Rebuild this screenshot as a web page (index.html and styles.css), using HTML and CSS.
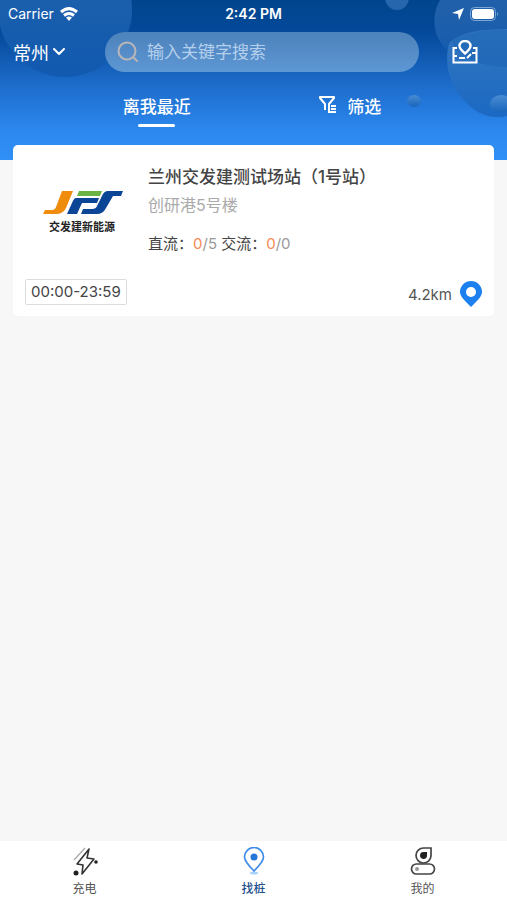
FILE: index.html
```html
<!DOCTYPE html>
<html lang="zh-CN">
<head>
<meta charset="utf-8">
<meta name="viewport" content="width=device-width, initial-scale=1">
<title>找桩</title>
<link rel="stylesheet" href="styles.css">
</head>
<body>
<div class="app">
  <header class="header">
    <svg class="decor decor-left" width="140" height="160" viewBox="0 0 140 160" aria-hidden="true">
      <defs>
        <linearGradient id="bubbleLeft" x1="0" y1="0" x2="0" y2="1">
          <stop offset="0.3" stop-color="#2367b3"/>
          <stop offset="1" stop-color="#1058ae"/>
        </linearGradient>
      </defs>
      <circle cx="65" cy="10" r="67" fill="url(#bubbleLeft)" opacity="0.85"/>
    </svg>
    <svg class="decor decor-right" width="127" height="160" viewBox="380 0 127 160" aria-hidden="true">
      <defs>
        <linearGradient id="bubble" x1="0" y1="0" x2="0" y2="1">
          <stop offset="0" stop-color="#4a8bd2"/>
          <stop offset="1" stop-color="#1765bd"/>
        </linearGradient>
        <linearGradient id="bubbleBig" x1="0" y1="0" x2="0" y2="1">
          <stop offset="0" stop-color="#3376be"/>
          <stop offset="1" stop-color="#1b69c4"/>
        </linearGradient>
        <linearGradient id="bubbleTop" x1="0" y1="0" x2="0" y2="1">
          <stop offset="0.2" stop-color="#2060aa"/>
          <stop offset="0.8" stop-color="#155caf"/>
        </linearGradient>
      </defs>
      <circle cx="397" cy="-2" r="12" fill="#2566ac"/>
      <path d="M440 0H507V67C476 67 447 58 438 38C432 25 434 10 440 0Z" fill="url(#bubbleTop)"/>
      <path d="M450 42C462 32 482 29 507 29V116C477 124 447 91 447 59C447 52 448 46 450 42Z" fill="url(#bubbleBig)"/>
      <path d="M507 30C490 29 468 32 452 40C453 53 476 67 507 67Z" fill="#1961b2" opacity="0.45"/>
      <ellipse cx="414" cy="101" rx="7" ry="6" fill="url(#bubble)"/>
      <ellipse cx="501" cy="104" rx="11" ry="9" fill="url(#bubble)"/>
    </svg>

    <div class="status">
      <div class="status-side">
        <span>Carrier</span>
        <svg width="18" height="14" viewBox="0 0 18 14" fill="none" stroke="#fff" stroke-width="3" aria-hidden="true">
          <path d="M1 5Q9-1.800 17 5M4 8.500Q9 4.500 14 8.500"/>
          <path d="M6 10.500Q9 8.500 12 10.500L9 14Z" fill="#fff" stroke="none"/>
        </svg>
      </div>
      <strong class="clock">2:42 PM</strong>
      <div class="status-side status-end">
        <svg width="12" height="12" viewBox="0 0 12 12" fill="#fff" aria-hidden="true"><path d="M12 0L7 12L6 6L0 5Z"/></svg>
        <svg width="29" height="14" viewBox="0 0 29 14" aria-hidden="true">
          <rect x="0.500" y="0.500" width="25" height="13" rx="4" fill="none" stroke="#7ba6d6"/>
          <rect x="2" y="2" width="22" height="10" rx="3" fill="#fff"/>
          <path d="M27 5Q29 7 27 9Z" fill="#7ba6d6"/>
        </svg>
      </div>
    </div>

    <div class="search-row">
      <button class="city" type="button">常州
        <svg width="12" height="8" viewBox="0 0 12 8" fill="none" stroke="#fff" stroke-width="2" stroke-linecap="round" stroke-linejoin="round" aria-hidden="true"><path d="M1 1L6 6L11 1"/></svg>
      </button>
      <label class="search">
        <svg width="22" height="22" viewBox="0 0 22 22" fill="none" stroke="#b9b6b8" stroke-width="2" stroke-linecap="round" aria-hidden="true"><circle cx="10" cy="10" r="8.500"/><path d="M17 17L20 20"/></svg>
        <input type="search" placeholder="输入关键字搜索" aria-label="输入关键字搜索">
      </label>
      <button class="map" type="button" aria-label="地图">
        <svg width="26" height="24" viewBox="0 0 26 24" fill="none" stroke="#fff" stroke-width="2" aria-hidden="true">
          <path d="M5 8H1.500V22.500H24.500V8H21"/>
          <path d="M13 13.500C9.500 10.500 7.500 8.500 7.500 6A5.500 5 0 0 1 18.500 6C18.500 8.500 16.500 10.500 13 13.500Z" stroke-width="2.400"/>
          <path d="M2 16H5M7 18H13M15 18L19 14M20 13H24"/>
        </svg>
      </button>
    </div>

    <nav class="filters">
      <button class="filter filter-active" type="button">离我最近</button>
      <button class="filter" type="button">
        <svg width="18" height="18" viewBox="0 0 18 18" fill="none" stroke="#fff" stroke-width="2" stroke-linejoin="round" aria-hidden="true">
          <path d="M6 14V8L1 2V1H15V2L10 8V17"/>
          <path d="M12 10H17M12 13H17M10 16H17"/>
        </svg>
        筛选
      </button>
    </nav>
  </header>

  <main class="list">
    <article class="card">
      <div class="station">
        <svg class="logo" width="80" height="46" viewBox="0 0 80 46" role="img" aria-label="交发建新能源">
          <path d="M19 2H30L23 19Q20 25 13 25H0L2 21H9Q12 21 13 18Z" fill="#f08c0c"/>
          <path d="M36 2H59L57 7H34Z" fill="#6ab345"/>
          <path d="M33 9H56L54 14H39L34 25H24L29 14Q31 9 33 9Z" fill="#0b4596"/>
          <path d="M65 2H80L78 7H70L63 19Q60 25 54 25H38L40 20H49Q53 20 54 17L59 7Q61 2 65 2Z" fill="#0b4596"/>
          <text class="logo-text" x="39" y="42" text-anchor="middle">交发建新能源</text>
        </svg>
        <div class="info">
          <h1 class="name">兰州交发建测试场站（1号站）</h1>
          <p class="address">创研港5号楼</p>
          <p class="ports">直流：<span class="free">0</span><span class="total">/5</span> 交流：<span class="free">0</span><span class="total">/0</span></p>
        </div>
      </div>
      <div class="card-foot">
        <span class="hours">00:00-23:59</span>
        <a class="distance" href="#">4.2km
          <svg width="22" height="26" viewBox="0 0 22 26" aria-hidden="true">
            <path d="M11 26C4 19 0 15 0 11A11 11 0 0 1 22 11C22 15 18 19 11 26Z" fill="#1c80ef"/>
            <circle cx="11" cy="11" r="5" fill="#fff"/>
          </svg>
        </a>
      </div>
    </article>
  </main>

  <nav class="tabbar">
    <a class="tab" href="#">
      <svg width="28" height="30" viewBox="0 0 28 30" fill="none" aria-hidden="true">
        <path d="M3 13L14 1" stroke="#aaa" stroke-width="1.300"/>
        <path d="M18 2L6 17L12 18L11 27L23 12L16 11Z" stroke="#333" stroke-width="1.600" stroke-linejoin="round"/>
        <circle cx="5" cy="26" r="2.500" fill="#222"/><circle cx="25" cy="15" r="1.800" fill="#222"/>
      </svg>
      充电
    </a>
    <a class="tab tab-active" href="#">
      <svg width="28" height="30" viewBox="0 0 28 30" fill="none" aria-hidden="true">
        <ellipse cx="14" cy="26" rx="4" ry="1.500" fill="#a9d2fa"/>
        <path d="M14 24C8 18 4.500 14 4.500 10A9.500 9.500 0 0 1 23.500 10C23.500 14 20 18 14 24Z" stroke="#3d8ce8" stroke-width="1.700"/>
        <circle cx="14" cy="10" r="3.500" fill="#2476d8"/>
      </svg>
      找桩
    </a>
    <a class="tab" href="#">
      <svg width="28" height="30" viewBox="0 0 28 30" fill="none" stroke="#444" stroke-width="1.700" aria-hidden="true">
        <path d="M22 1V9A7.500 7.500 0 1 1 14.500 1Z"/>
        <path d="M18 5V9A3.500 3.500 0 1 1 14.500 5Z" fill="#222" stroke="none"/>
        <rect x="2.500" y="17" width="23" height="10" rx="5" fill="#fff"/>
        <circle cx="8" cy="22" r="2" fill="#999" stroke="none"/>
      </svg>
      我的
    </a>
  </nav>
</div>
</body>
</html>
```

FILE: styles.css
```css
* {
  box-sizing: border-box;
}

body {
  margin: 0;
  background: #f7f7f7;
  color: #444;
  font-family: Inter, "Noto Sans CJK SC", sans-serif;
}

button {
  padding: 0;
  border: 0;
  background: none;
  color: inherit;
  font: inherit;
}

a {
  color: inherit;
  text-decoration: none;
}

svg {
  display: block;
  flex: none;
}

.app {
  display: flex;
  flex-direction: column;
  min-height: 100vh;
}

.header {
  position: relative;
  padding-bottom: 33px;
  background: linear-gradient(#00458c, #04499a 20%, #1c6bc9 52%, #2c88ef 82%, #3090f7);
  color: #fff;
}

.decor {
  position: absolute;
  top: 0;
}

.decor-left {
  left: 0;
}

.decor-right {
  right: 0;
}

.status,
.search-row,
.filters {
  position: relative;
  display: flex;
  align-items: center;
}

.status {
  height: 27px;
  padding: 0 8px;
  font-size: 14px;
}

.status-side {
  display: flex;
  flex: 1;
  align-items: center;
  gap: 6px;
}

.status-end {
  justify-content: flex-end;
}

.clock {
  font-weight: 600;
}

.search-row {
  padding: 5px 29px 0 13px;
}

.city {
  display: flex;
  flex: none;
  align-items: center;
  gap: 4px;
  width: 92px;
  font-size: 18px;
}

.search {
  display: flex;
  flex: 1;
  align-items: center;
  gap: 8px;
  min-width: 0;
  height: 40px;
  padding: 0 12px;
  border-radius: 20px;
  background: linear-gradient(#4d82bb, #5d97d4);
}

.search input {
  flex: 1;
  min-width: 0;
  padding: 0;
  border: 0;
  outline: 0;
  background: none;
  color: #fff;
  font: inherit;
  font-size: 17px;
}

.search input::placeholder {
  color: #b5d0ec;
}

.map {
  margin-left: 33px;
}

.filters {
  padding: 19px 60px 0;
}

.filter {
  display: flex;
  position: relative;
  flex: 1;
  align-items: center;
  justify-content: center;
  gap: 10px;
  height: 36px;
  padding-bottom: 8px;
  font-size: 17px;
  font-weight: 500;
}

.filter-active::after {
  content: "";
  position: absolute;
  bottom: 0;
  width: 37px;
  height: 3px;
  border-radius: 2px;
  background: #fff;
}

.list {
  position: relative;
  flex: 1;
  margin-top: -15px;
  padding: 0 13px;
}

.card {
  padding: 19px 12px 7px;
  border-radius: 5px;
  background: #fff;
}

.station {
  display: flex;
  gap: 25px;
  padding-left: 18px;
}

.logo {
  margin-top: 25px;
}

.logo-text {
  fill: #222;
  font-size: 11px;
  font-weight: 700;
}

.info {
  min-width: 0;
}

.name,
.address,
.ports {
  margin: 0;
}

.name {
  font-size: 17px;
  font-weight: 500;
  line-height: 26px;
}

.address {
  margin-top: 3px;
  color: #aaa;
  font-size: 16px;
  line-height: 24px;
}

.ports {
  margin-top: 16px;
  font-size: 15px;
  line-height: 22px;
}

.free {
  color: #f58a55;
}

.total {
  color: #999;
}

.card-foot {
  display: flex;
  align-items: center;
  justify-content: space-between;
  margin-top: 24px;
}

.hours {
  margin-bottom: 4px;
  padding: 0 5px;
  border: 1px solid #ddd;
  border-radius: 2px;
  font-size: 15px;
  line-height: 24px;
}

.distance {
  display: flex;
  align-items: center;
  gap: 8px;
  color: #555;
  font-size: 15px;
}

.tabbar {
  display: flex;
  height: 59px;
  background: #fff;
}

.tab {
  display: flex;
  flex: 1;
  flex-direction: column;
  align-items: center;
  padding-top: 6px;
  color: #555;
  font-size: 12px;
  line-height: 24px;
}

.tab-active {
  color: #1c4f8c;
  font-weight: 500;
}
```
